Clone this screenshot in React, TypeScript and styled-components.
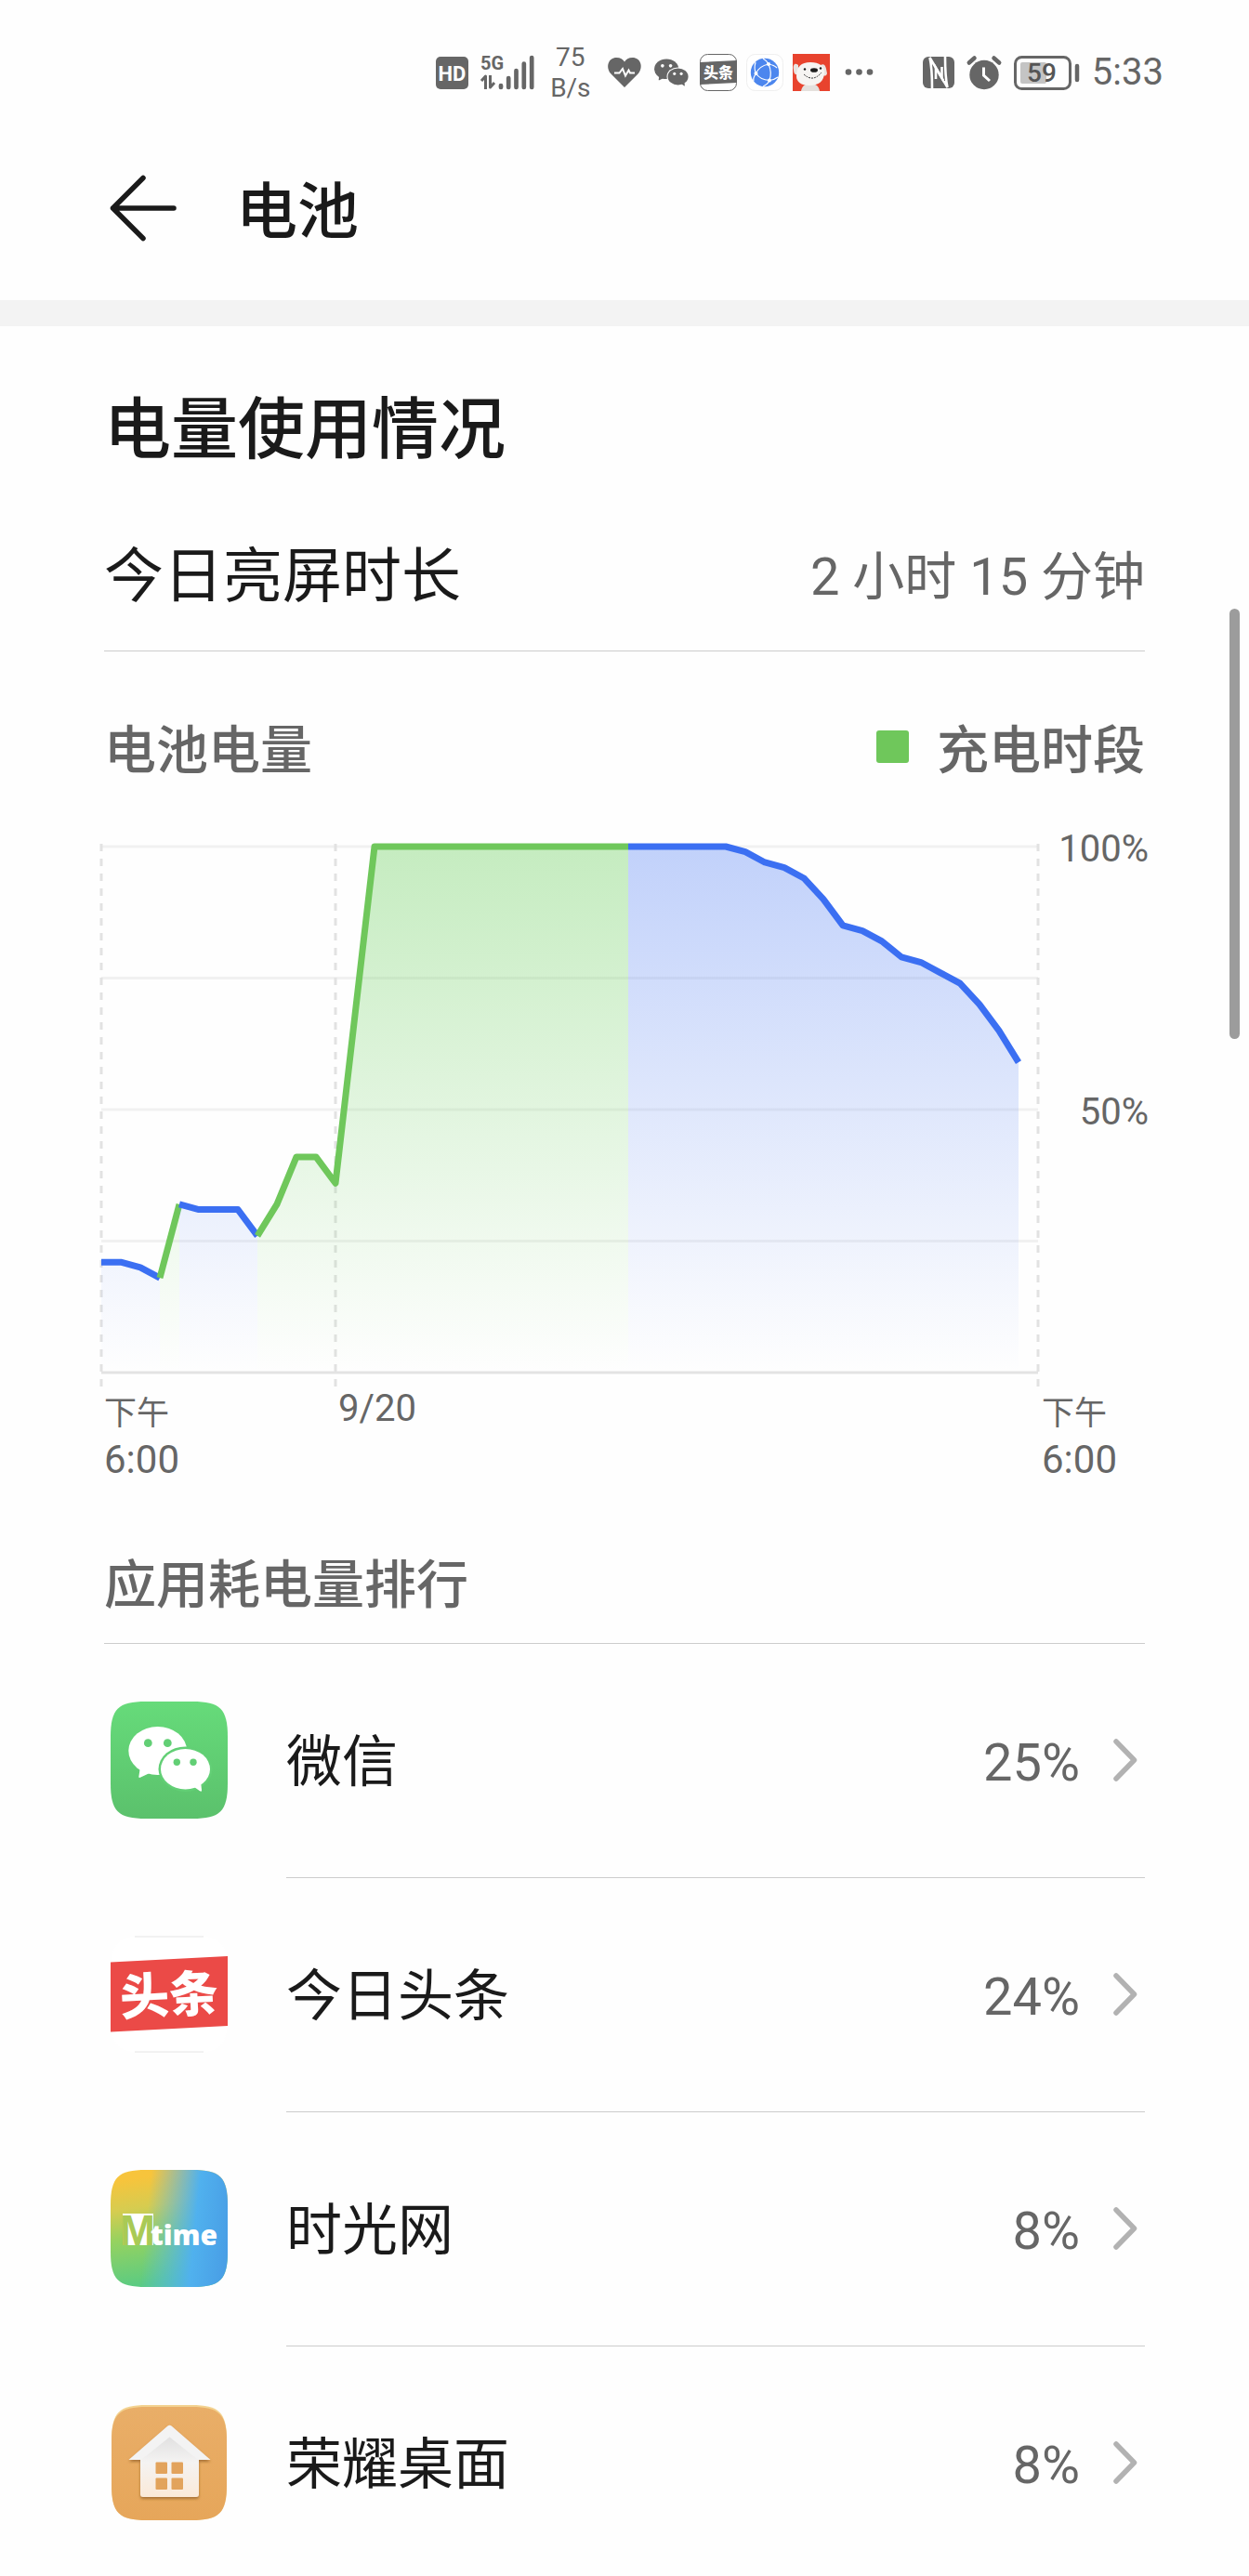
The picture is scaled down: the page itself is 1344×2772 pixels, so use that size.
import type { ReactNode } from "react";
import styled, { createGlobalStyle } from "styled-components";

const GREEN = "#6fc75b";
const BLUE = "#3b6ff2";
const GREY = "#666666";

const GlobalStyle = createGlobalStyle`
  * {
    box-sizing: border-box;
  }
  body {
    margin: 0;
    background: #fefefe;
    color: #1a1a1a;
    font-family: Roboto, "Noto Sans CJK SC", sans-serif;
  }
`;

const Page = styled.div`
  position: relative;
  min-height: 100vh;
`;

const StatusBar = styled.div`
  display: flex;
  align-items: center;
  justify-content: flex-end;
  height: 156px;
  padding: 0 92px;
  color: ${GREY};

  svg {
    display: block;
    flex: none;
    overflow: visible;
  }
`;

const StatusGroup = styled.div<{ $gap: number }>`
  display: flex;
  align-items: center;
  gap: ${(props) => props.$gap}px;
`;

const Speed = styled.div`
  width: 44px;
  margin: 0 18px 0 16px;
  font-size: 28px;
  line-height: 33px;
  text-align: center;
`;

const Clock = styled.span`
  font-size: 40px;
  line-height: 48px;
`;

const Header = styled.header`
  display: flex;
  align-items: center;
  gap: 60px;
  height: 167px;
  padding: 0 112px 31px;
`;

const BackButton = styled.button`
  padding: 0;
  border: 0;
  background: none;
  cursor: pointer;

  svg {
    display: block;
  }
`;

const PageTitle = styled.h1`
  margin: 0;
  padding-top: 10px;
  font-size: 66px;
  line-height: 96px;
  font-weight: 500;
`;

const Band = styled.div`
  height: 28px;
  background: #f3f3f3;
`;

const Content = styled.main`
  padding: 64px 112px 0;
`;

const SectionTitle = styled.h2`
  margin: 0;
  font-size: 72px;
  line-height: 96px;
  font-weight: 500;
`;

const ScreenTime = styled.div`
  display: flex;
  align-items: center;
  justify-content: space-between;
  padding: 62px 0 31px;
  border-bottom: 1px solid #cccccc;
  font-size: 64px;
  line-height: 96px;
`;

const Value = styled.span`
  font-size: 56px;
  color: ${GREY};
`;

const ChartHead = styled.div`
  display: flex;
  align-items: center;
  justify-content: space-between;
  margin-top: 67px;
  color: ${GREY};
  font-size: 56px;
  line-height: 80px;
  font-weight: 500;
`;

const Legend = styled.div`
  display: flex;
  align-items: center;
  gap: 30px;
`;

const Swatch = styled.span`
  width: 35px;
  height: 35px;
  margin-bottom: 10px;
  border-radius: 3px;
  background: ${GREEN};
`;

const ChartBox = styled.figure`
  margin: 38px -8px 0;

  svg {
    display: block;
    width: 100%;
  }
`;

const RankTitle = styled.h3`
  margin: 0;
  padding: 66px 0 22px;
  border-bottom: 1px solid #cccccc;
  color: ${GREY};
  font-size: 56px;
  line-height: 80px;
  font-weight: 500;
`;

const AppList = styled.ul`
  margin: 0;
  padding: 0;
  list-style: none;
`;

const AppLink = styled.a`
  display: flex;
  align-items: flex-start;
  gap: 63px;
  padding-left: 7px;
  color: inherit;
  text-decoration: none;

  > svg {
    flex: none;
    margin-top: 62px;
  }
`;

const AppInfo = styled.div`
  display: flex;
  flex: 1;
  align-items: center;
  padding: 74px 8px 75px 0;
  border-bottom: 1px solid #cccccc;
  line-height: 96px;
`;

const AppItem = styled.li`
  &:last-child ${AppInfo} {
    padding-bottom: 71px;
    border-bottom: 0;
  }
`;

const AppName = styled.span`
  flex: 1;
  padding-top: 6px;
  font-size: 60px;
`;

const Percent = styled.span`
  margin-right: 36px;
  padding-top: 6px;
  font-size: 56px;
  color: ${GREY};
`;

const ScrollThumb = styled.div`
  position: absolute;
  top: 655px;
  right: 10px;
  width: 11px;
  height: 463px;
  border-radius: 6px;
  background: #9c9c9c;
`;

const Bubbles = ({ fill, back }: { fill: string; back: string }) => (
  <>
    <g fill={fill}>
      <ellipse cx="50.7" cy="53" rx="31.4" ry="26" />
      <path d="M32 70 L30.3 81 Q30.4 82.8 32.4 81.6 L42 77 Z" />
    </g>
    <circle cx="40.3" cy="44.7" r="4.4" fill={back} />
    <circle cx="61.3" cy="44.7" r="4.4" fill={back} />
    <ellipse cx="80.5" cy="72.7" rx="29" ry="24.2" fill={back} />
    <g fill={fill}>
      <ellipse cx="80.5" cy="72.7" rx="26.5" ry="21.7" />
      <path d="M90 92 L96 96.2 Q98.4 97.6 98 95 L97 86 Z" />
    </g>
    <circle cx="71.3" cy="65.3" r="3.7" fill={back} />
    <circle cx="89" cy="65.3" r="3.7" fill={back} />
  </>
);

const TILE = "M0 38 C0 8 8 0 38 0 H88 C118 0 126 8 126 38 V88 C126 118 118 126 88 126 H38 C8 126 0 118 0 88 Z";

const WechatIcon = () => (
  <svg width="126" height="126" viewBox="0 0 126 126" aria-hidden="true">
    <defs>
      <linearGradient id="wechat" x1="0" y1="0" x2="0" y2="1">
        <stop offset="0" stopColor="#66db7a" />
        <stop offset="1" stopColor="#5bc16c" />
      </linearGradient>
    </defs>
    <path d={TILE} fill="url(#wechat)" />
    <Bubbles fill="#ffffff" back="#62cf75" />
  </svg>
);

const ToutiaoIcon = () => (
  <svg width="126" height="126" viewBox="0 0 126 126" aria-hidden="true">
    <path d={TILE} fill="#ffffff" />
    <path d="M26 1 H100 M26 125 H100" stroke="#e4e4e4" strokeWidth="1" />
    <path d="M0 28.5 L126 22 V97 L0 103.5 Z" fill="#eb4a47" />
    <text x="63" y="83" fontSize="53" fontWeight="900" textAnchor="middle" fill="#ffffff" transform="rotate(-3 63 63)">
      头条
    </text>
  </svg>
);

const MtimeIcon = () => (
  <svg width="126" height="126" viewBox="0 0 126 126" aria-hidden="true">
    <defs>
      <linearGradient id="mtimeLeft" x1="0" y1="0" x2="0.15" y2="1">
        <stop offset="0.1" stopColor="#f7c43c" />
        <stop offset="0.35" stopColor="#d6cc50" />
        <stop offset="0.6" stopColor="#96d25f" />
        <stop offset="1" stopColor="#5bcb82" />
      </linearGradient>
      <linearGradient id="mtimeRight" x1="0" y1="0.45" x2="1" y2="0.55">
        <stop offset="0.3" stopColor="#55b8ee" stopOpacity="0" />
        <stop offset="0.72" stopColor="#50b1ee" />
        <stop offset="1" stopColor="#499fe6" />
      </linearGradient>
    </defs>
    <path d={TILE} fill="url(#mtimeLeft)" />
    <path d={TILE} fill="url(#mtimeRight)" />
    <rect x="13" y="47" width="33" height="34" fill="#ffffff" />
    <text x="29" y="81" fontFamily="Liberation Sans Narrow, Liberation Sans, sans-serif" fontSize="46" fontWeight="700" textAnchor="middle" fill="#a9ca55">
      M
    </text>
    <text x="79" y="81" fontFamily="Open Sans, sans-serif" fontSize="30" fontWeight="800" textAnchor="middle" fill="#ffffff">
      time
    </text>
  </svg>
);

const HomeIcon = () => (
  <svg width="126" height="126" viewBox="0 0 126 126" aria-hidden="true">
    <defs>
      <linearGradient id="wall" x1="0" y1="0" x2="0" y2="1">
        <stop offset="0" stopColor="#dedede" />
        <stop offset="0.45" stopColor="#f4f3f2" />
        <stop offset="1" stopColor="#fbe9d8" />
      </linearGradient>
      <linearGradient id="plate" x1="0" y1="0" x2="0" y2="1">
        <stop offset="0" stopColor="#e9ae68" />
        <stop offset="1" stopColor="#e6a65a" />
      </linearGradient>
      <filter id="houseShadow" x="-20%" y="-20%" width="140%" height="140%">
        <feDropShadow dx="0" dy="2" stdDeviation="1.5" floodColor="#8a5a20" floodOpacity="0.7" />
      </filter>
    </defs>
    <path d="M1 39 C1 9 9 1 39 1 H87 C117 1 125 9 125 39 V87 C125 117 117 125 87 125 H39 C9 125 1 117 1 87 Z" fill="#f3d391" />
    <path d="M1 40 C1 11 9 3 39 3 H87 C117 3 125 11 125 40 V87 C125 117 117 125 87 125 H39 C9 125 1 117 1 87 Z" fill="url(#plate)" />
    <g filter="url(#houseShadow)">
      <path d="M32 56 L63.5 32 L95 56 V97 Q95 100 92 100 H35 Q32 100 32 97 Z" fill="url(#wall)" />
      <path d="M61.5 23.5 Q63.5 22 65.5 23.5 L107.5 60 H94 L63.5 35.5 L33 60 H19.5 Z" fill="#f3f3f3" />
    </g>
    <g fill="#e2a35c">
      <rect x="48.5" y="62.5" width="12.5" height="12.5" rx="1" />
      <rect x="65.5" y="62.5" width="12.5" height="12.5" rx="1" />
      <rect x="48.5" y="79.5" width="12.5" height="12.5" rx="1" />
      <rect x="65.5" y="79.5" width="12.5" height="12.5" rx="1" />
    </g>
  </svg>
);

const SignalIcons = () => (
  <>
    <svg width="35" height="35" viewBox="0 0 35 35" aria-hidden="true">
      <rect width="35" height="35" rx="5" fill={GREY} />
      <text x="17.5" y="25.5" fontSize="22" fontWeight="700" textAnchor="middle" fill="#ffffff">
        HD
      </text>
    </svg>
    <svg width="59" height="46" viewBox="0 -4 59 46" aria-hidden="true">
      <text x="0" y="16" fontFamily="Liberation Sans Narrow, Roboto, sans-serif" fontSize="20" fontWeight="700" fill={GREY}>
        5G
      </text>
      <path d="M5.5 37 V23 L1 28 M10.5 22 V35 L15 30" fill="none" stroke={GREY} strokeWidth="3" strokeLinejoin="round" />
      <path d="M22 33 V35 M30.2 25 V35 M38.5 17 V35 M46.8 9.5 V35 M55.2 3 V35" stroke={GREY} strokeWidth="4.7" strokeLinecap="round" />
    </svg>
  </>
);

const NotificationIcons = () => (
  <>
    <svg width="36" height="32" viewBox="0 0 36 32" aria-hidden="true">
      <path d="M18 32 L3 17 C-2.5 10 0.5 0 9.5 0 C13.5 0 16.5 2 18 4.5 C19.5 2 22.5 0 26.5 0 C35.5 0 38.5 10 33 17 Z" fill={GREY} />
      <path d="M7 16.5 H12.5 L16 12 L19 19.5 L22.5 13.5 L24 16.5 H29" fill="none" stroke="#ffffff" strokeWidth="2" />
    </svg>
    <svg width="37" height="30" viewBox="19 26 89 72" aria-hidden="true">
      <Bubbles fill={GREY} back="#ffffff" />
    </svg>
  </>
);

const AppNotificationIcons = () => (
  <>
    <svg width="40" height="40" viewBox="0 0 40 40" aria-hidden="true">
      <rect x="0.5" y="0.5" width="39" height="39" rx="8" fill="#ffffff" stroke={GREY} />
      <path d="M0 9 L40 7 V31 L0 33 Z" fill={GREY} />
      <text x="20" y="26" fontSize="16" fontWeight="900" textAnchor="middle" fill="#ffffff">
        头条
      </text>
    </svg>
    <svg width="40" height="40" viewBox="0 0 40 40" aria-hidden="true">
      <rect x="0.5" y="0.5" width="39" height="39" rx="9" fill="#ffffff" stroke="#efefef" />
      <circle cx="20" cy="20" r="15.2" fill="#4c86ee" />
      <g fill="none" stroke="#ffffff" strokeWidth="1.2">
        <path d="M24 11 Q14 13 10.5 21 Q15 28 25 28.5 Q28 20 24 11 Q22 7 18 5" />
        <path d="M10.5 21 Q8 16 10 9 M10.5 21 Q7 26 8 29 M25 28.5 Q30 28 34 25 M25 28.5 Q23 33 18 35 M24 11 Q30 12 33 15" />
      </g>
      <g fill="#ffffff">
        <circle cx="24" cy="11" r="2" />
        <circle cx="10.5" cy="21" r="2" />
        <circle cx="25" cy="28.5" r="2" />
      </g>
    </svg>
    <svg width="40" height="40" viewBox="0 0 40 40" aria-hidden="true">
      <rect width="40" height="40" fill="#e8432e" />
      <path d="M9 40 C10 34 14 32 19 32 C24 32 28 34 29 40 Z" fill="#e4e0dd" />
      <path d="M6 12 C2 9 0 12 1 17 C1 21 3 24 6 21 Z M30 12 C35 9 36 15 37 21 C36 25 32 24 30 20 Z" fill="#e9e4e1" />
      <path d="M4 24 C4 14 9 9 19 9 C29 9 34 13 34 20 C34 29 28 34 18 34 C9 34 4 30 4 24 Z" fill="#f6f4f2" />
      <path d="M12 22 Q22 31 31 20" fill="none" stroke="#333333" strokeWidth="1" strokeDasharray="2 1" />
      <ellipse cx="23" cy="17.5" rx="4" ry="2.3" fill="#1d1d1d" />
      <circle cx="13" cy="16.5" r="1.2" fill="#1d1d1d" />
      <circle cx="30" cy="15.5" r="1.2" fill="#1d1d1d" />
    </svg>
  </>
);

const SystemIcons = () => (
  <>
    <svg width="34" height="34" viewBox="0 0 34 34" aria-hidden="true">
      <rect width="34" height="34" rx="6" fill={GREY} />
      <path d="M10 34 C10 22 10 12 7.5 1 L20.5 23 V11" fill="none" stroke="#ffffff" strokeWidth="2.6" />
      <path d="M14 24 V12 L26.5 33 C24 22 24 12 24 0" fill="none" stroke="#ffffff" strokeWidth="2.6" />
    </svg>
    <svg width="38" height="37" viewBox="0 0 38 37" aria-hidden="true">
      <circle cx="19" cy="20.5" r="15.7" fill={GREY} />
      <path d="M2.8 7.5 L8.5 2.5 M35.2 7.5 L29.5 2.5" stroke={GREY} strokeWidth="4.5" strokeLinecap="round" />
      <path d="M18.5 12.5 V21 L25 27" fill="none" stroke="#ffffff" strokeWidth="3" />
    </svg>
    <svg width="71" height="37" viewBox="0 0 71 37" aria-hidden="true">
      <rect x="1.5" y="1.5" width="59" height="34" rx="7" fill="none" stroke={GREY} strokeWidth="3" />
      <rect x="7" y="7" width="28" height="23" rx="2" fill="#c4c4c4" />
      <path d="M68 11 V26" stroke={GREY} strokeWidth="4.5" strokeLinecap="round" />
      <text x="30" y="28" fontSize="28" fontWeight="500" textAnchor="middle" fill="#555555">
        59
      </text>
    </svg>
  </>
);

interface Segment {
  start: number;
  charging: boolean;
  levels: number[];
}

// one level for every half hour, starting at 18:00
const segments: Segment[] = [
  { start: 0, charging: false, levels: [21, 21, 20, 18] },
  { start: 3, charging: true, levels: [18, 32] },
  { start: 4, charging: false, levels: [32, 31, 31, 31, 26] },
  {
    start: 8,
    charging: true,
    levels: [26, 32, 41, 41, 36, 68, 100, 100, 100, 100, 100, 100, 100, 100, 100, 100, 100, 100, 100, 100],
  },
  {
    start: 27,
    charging: false,
    levels: [100, 100, 100, 100, 100, 100, 99, 97, 96, 94, 90, 85, 84, 82, 79, 78, 76, 74, 70, 65, 59],
  },
];

const LEFT = 5;
const RIGHT = 1013;
const TOP = 25;
const BOTTOM = 591;

const toX = (slot: number) => LEFT + (slot * (RIGHT - LEFT)) / 48;
const toY = (level: number) => BOTTOM - (level * (BOTTOM - TOP)) / 100;

const BatteryChart = () => (
  <ChartBox>
    <svg viewBox="0 0 1136 714" role="img" aria-label="电池电量">
      <defs>
        <linearGradient id="charge" gradientUnits="userSpaceOnUse" x1="0" y1={TOP} x2="0" y2={BOTTOM}>
          <stop offset="0" stopColor="#70d163" stopOpacity="0.4" />
          <stop offset="1" stopColor="#70d163" stopOpacity="0" />
        </linearGradient>
        <linearGradient id="drain" gradientUnits="userSpaceOnUse" x1="0" y1={TOP} x2="0" y2={BOTTOM}>
          <stop offset="0" stopColor="#668ef5" stopOpacity="0.4" />
          <stop offset="1" stopColor="#668ef5" stopOpacity="0" />
        </linearGradient>
      </defs>
      {[100, 75, 50, 25, 0].map((level) => (
        <line
          key={level}
          x1={LEFT}
          x2={RIGHT}
          y1={toY(level)}
          y2={toY(level)}
          stroke={level === 0 ? "#e3e3e3" : "#f1f1f1"}
          strokeWidth="3"
        />
      ))}
      {[0, 12, 48].map((slot) => (
        <line
          key={slot}
          x1={toX(slot)}
          x2={toX(slot)}
          y1={TOP - 3}
          y2={BOTTOM + 15}
          stroke="#e2e2e2"
          strokeWidth="3"
          strokeDasharray="8 8"
        />
      ))}
      {segments.map(({ start, charging, levels }) => {
        const line = levels.map((level, i) => `${toX(start + i)},${toY(level)}`).join(" ");
        const end = toX(start + levels.length - 1);
        return (
          <g key={start}>
            <polygon
              points={`${toX(start)},${BOTTOM} ${line} ${end},${BOTTOM}`}
              fill={charging ? "url(#charge)" : "url(#drain)"}
            />
            <polyline
              points={line}
              fill="none"
              stroke={charging ? GREEN : BLUE}
              strokeWidth="7"
              strokeLinejoin="round"
            />
          </g>
        );
      })}
      <g fill={GREY} fontSize="40">
        <text x="1132" y="41" textAnchor="end">100%</text>
        <text x="1132" y="324" textAnchor="end">50%</text>
        <text x="8" y="647" fontSize="35">下午</text>
        <text x="8" y="699" fontSize="42">6:00</text>
        <text x="260" y="643">9/20</text>
        <text x="1017" y="647" fontSize="35">下午</text>
        <text x="1017" y="699" fontSize="42">6:00</text>
      </g>
    </svg>
  </ChartBox>
);

interface AppUsage {
  name: string;
  percent: number;
  icon: ReactNode;
}

const apps: AppUsage[] = [
  { name: "微信", percent: 25, icon: <WechatIcon /> },
  { name: "今日头条", percent: 24, icon: <ToutiaoIcon /> },
  { name: "时光网", percent: 8, icon: <MtimeIcon /> },
  { name: "荣耀桌面", percent: 8, icon: <HomeIcon /> },
];

const App = () => {
  return (
    <>
      <GlobalStyle />
      <Page>
        <StatusBar>
          <StatusGroup $gap={13}>
            <SignalIcons />
          </StatusGroup>
          <Speed>
            75
            <br />
            B/s
          </Speed>
          <StatusGroup $gap={12}>
            <StatusGroup $gap={14}>
              <NotificationIcons />
            </StatusGroup>
            <StatusGroup $gap={10}>
              <AppNotificationIcons />
            </StatusGroup>
          </StatusGroup>
          <svg width="100" height="8" viewBox="0 0 100 8" aria-hidden="true">
            <circle cx="20" cy="3.5" r="3.3" fill={GREY} />
            <circle cx="31.5" cy="3.5" r="3.3" fill={GREY} />
            <circle cx="43" cy="3.5" r="3.3" fill={GREY} />
          </svg>
          <StatusGroup $gap={13}>
            <SystemIcons />
            <Clock>5:33</Clock>
          </StatusGroup>
        </StatusBar>
        <Header>
          <BackButton aria-label="返回">
            <svg width="82" height="72" viewBox="-5 0 82 72" aria-hidden="true">
              <path d="M37 3.5 L4.5 36 L37 68.5 M4.5 36 H70" fill="none" stroke="#1a1a1a" strokeWidth="5.5" strokeLinecap="round" strokeLinejoin="round" />
            </svg>
          </BackButton>
          <PageTitle>电池</PageTitle>
        </Header>
        <Band />
        <Content>
          <SectionTitle>电量使用情况</SectionTitle>
          <ScreenTime>
            <span>今日亮屏时长</span>
            <Value>2 小时 15 分钟</Value>
          </ScreenTime>
          <ChartHead>
            <span>电池电量</span>
            <Legend>
              <Swatch />
              充电时段
            </Legend>
          </ChartHead>
          <BatteryChart />
          <RankTitle>应用耗电量排行</RankTitle>
          <AppList>
            {apps.map((app) => (
              <AppItem key={app.name}>
                <AppLink href="#">
                  {app.icon}
                  <AppInfo>
                    <AppName>{app.name}</AppName>
                    <Percent>{app.percent}%</Percent>
                    <svg width="26" height="46" viewBox="0 0 26 46" aria-hidden="true">
                      <path d="M3 3 L22.5 23 L3 43" fill="none" stroke="#b2b2b2" strokeWidth="5.5" strokeLinecap="round" strokeLinejoin="round" />
                    </svg>
                  </AppInfo>
                </AppLink>
              </AppItem>
            ))}
          </AppList>
        </Content>
        <ScrollThumb />
      </Page>
    </>
  );
};

export default App;
